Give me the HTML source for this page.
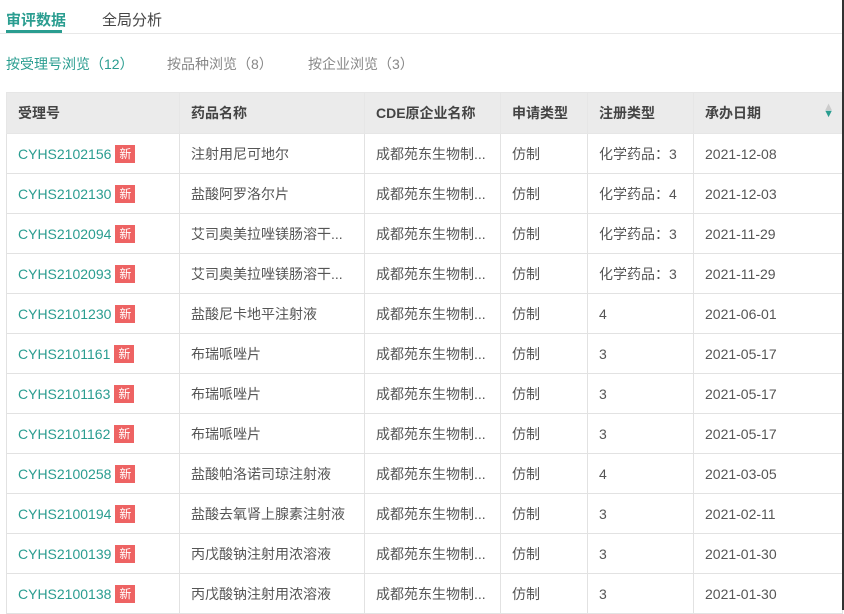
<!DOCTYPE html><html><head><meta charset="utf-8"><style>
*{margin:0;padding:0;box-sizing:border-box}
body{width:844px;height:610px;overflow:hidden;background:#fff;font-family:"Liberation Sans","Noto Sans CJK SC",sans-serif;color:#555;font-size:14px;position:relative}
.tab{position:absolute;top:9px;font-size:15px}
.sub{position:absolute;top:54px;font-size:14px;color:#888}
table{position:absolute;left:6px;top:92px;border-collapse:collapse;table-layout:fixed;width:836px}
td,th{border:1px solid #e2e2e2;height:40px;padding-left:11px;text-align:left;white-space:nowrap;overflow:hidden}
th{background:#ebebeb;font-weight:bold;color:#444;height:41px;border-color:#e6e6e6}
td{color:#555}
.id{color:#2a9d90}
.n{display:inline-block;background:#ee6363;color:#fff;font-size:12px;width:20px;height:18px;line-height:18px;text-align:center;margin-left:4px;vertical-align:1px}
</style></head><body>
<div class="tab" style="left:6px;color:#2a9d90;font-weight:bold">审评数据</div>
<div style="position:absolute;left:6px;top:30px;width:56px;height:3px;background:#2a9d90"></div>
<div class="tab" style="left:102px;color:#444">全局分析</div>
<div style="position:absolute;left:0;top:33px;width:844px;height:1px;background:#e8e8e8"></div>
<div class="sub" style="left:6px;color:#2a9d90">按受理号浏览（12）</div>
<div class="sub" style="left:167px">按品种浏览（8）</div>
<div class="sub" style="left:308px">按企业浏览（3）</div>
<table>
<colgroup><col style="width:173px"><col style="width:185px"><col style="width:136px"><col style="width:87px"><col style="width:106px"><col style="width:149px"></colgroup>
<tr><th>受理号</th><th>药品名称</th><th>CDE原企业名称</th><th>申请类型</th><th>注册类型</th><th>承办日期<span style="float:right;margin-right:8px;font-size:11px;line-height:7px;margin-top:1px;color:#2a9d90;text-align:center"><span style="color:#ccc">▲</span><br>▼</span></th></tr>
<tr><td><span class="id">CYHS2102156</span><span class="n">新</span></td><td>注射用尼可地尔</td><td>成都苑东生物制...</td><td>仿制</td><td>化学药品：3</td><td>2021-12-08</td></tr>
<tr><td><span class="id">CYHS2102130</span><span class="n">新</span></td><td>盐酸阿罗洛尔片</td><td>成都苑东生物制...</td><td>仿制</td><td>化学药品：4</td><td>2021-12-03</td></tr>
<tr><td><span class="id">CYHS2102094</span><span class="n">新</span></td><td>艾司奥美拉唑镁肠溶干...</td><td>成都苑东生物制...</td><td>仿制</td><td>化学药品：3</td><td>2021-11-29</td></tr>
<tr><td><span class="id">CYHS2102093</span><span class="n">新</span></td><td>艾司奥美拉唑镁肠溶干...</td><td>成都苑东生物制...</td><td>仿制</td><td>化学药品：3</td><td>2021-11-29</td></tr>
<tr><td><span class="id">CYHS2101230</span><span class="n">新</span></td><td>盐酸尼卡地平注射液</td><td>成都苑东生物制...</td><td>仿制</td><td>4</td><td>2021-06-01</td></tr>
<tr><td><span class="id">CYHS2101161</span><span class="n">新</span></td><td>布瑞哌唑片</td><td>成都苑东生物制...</td><td>仿制</td><td>3</td><td>2021-05-17</td></tr>
<tr><td><span class="id">CYHS2101163</span><span class="n">新</span></td><td>布瑞哌唑片</td><td>成都苑东生物制...</td><td>仿制</td><td>3</td><td>2021-05-17</td></tr>
<tr><td><span class="id">CYHS2101162</span><span class="n">新</span></td><td>布瑞哌唑片</td><td>成都苑东生物制...</td><td>仿制</td><td>3</td><td>2021-05-17</td></tr>
<tr><td><span class="id">CYHS2100258</span><span class="n">新</span></td><td>盐酸帕洛诺司琼注射液</td><td>成都苑东生物制...</td><td>仿制</td><td>4</td><td>2021-03-05</td></tr>
<tr><td><span class="id">CYHS2100194</span><span class="n">新</span></td><td>盐酸去氧肾上腺素注射液</td><td>成都苑东生物制...</td><td>仿制</td><td>3</td><td>2021-02-11</td></tr>
<tr><td><span class="id">CYHS2100139</span><span class="n">新</span></td><td>丙戊酸钠注射用浓溶液</td><td>成都苑东生物制...</td><td>仿制</td><td>3</td><td>2021-01-30</td></tr>
<tr><td><span class="id">CYHS2100138</span><span class="n">新</span></td><td>丙戊酸钠注射用浓溶液</td><td>成都苑东生物制...</td><td>仿制</td><td>3</td><td>2021-01-30</td></tr>
</table>
<div style="position:absolute;left:842px;top:0;width:2px;height:610px;background:#333"></div>
</body></html>
